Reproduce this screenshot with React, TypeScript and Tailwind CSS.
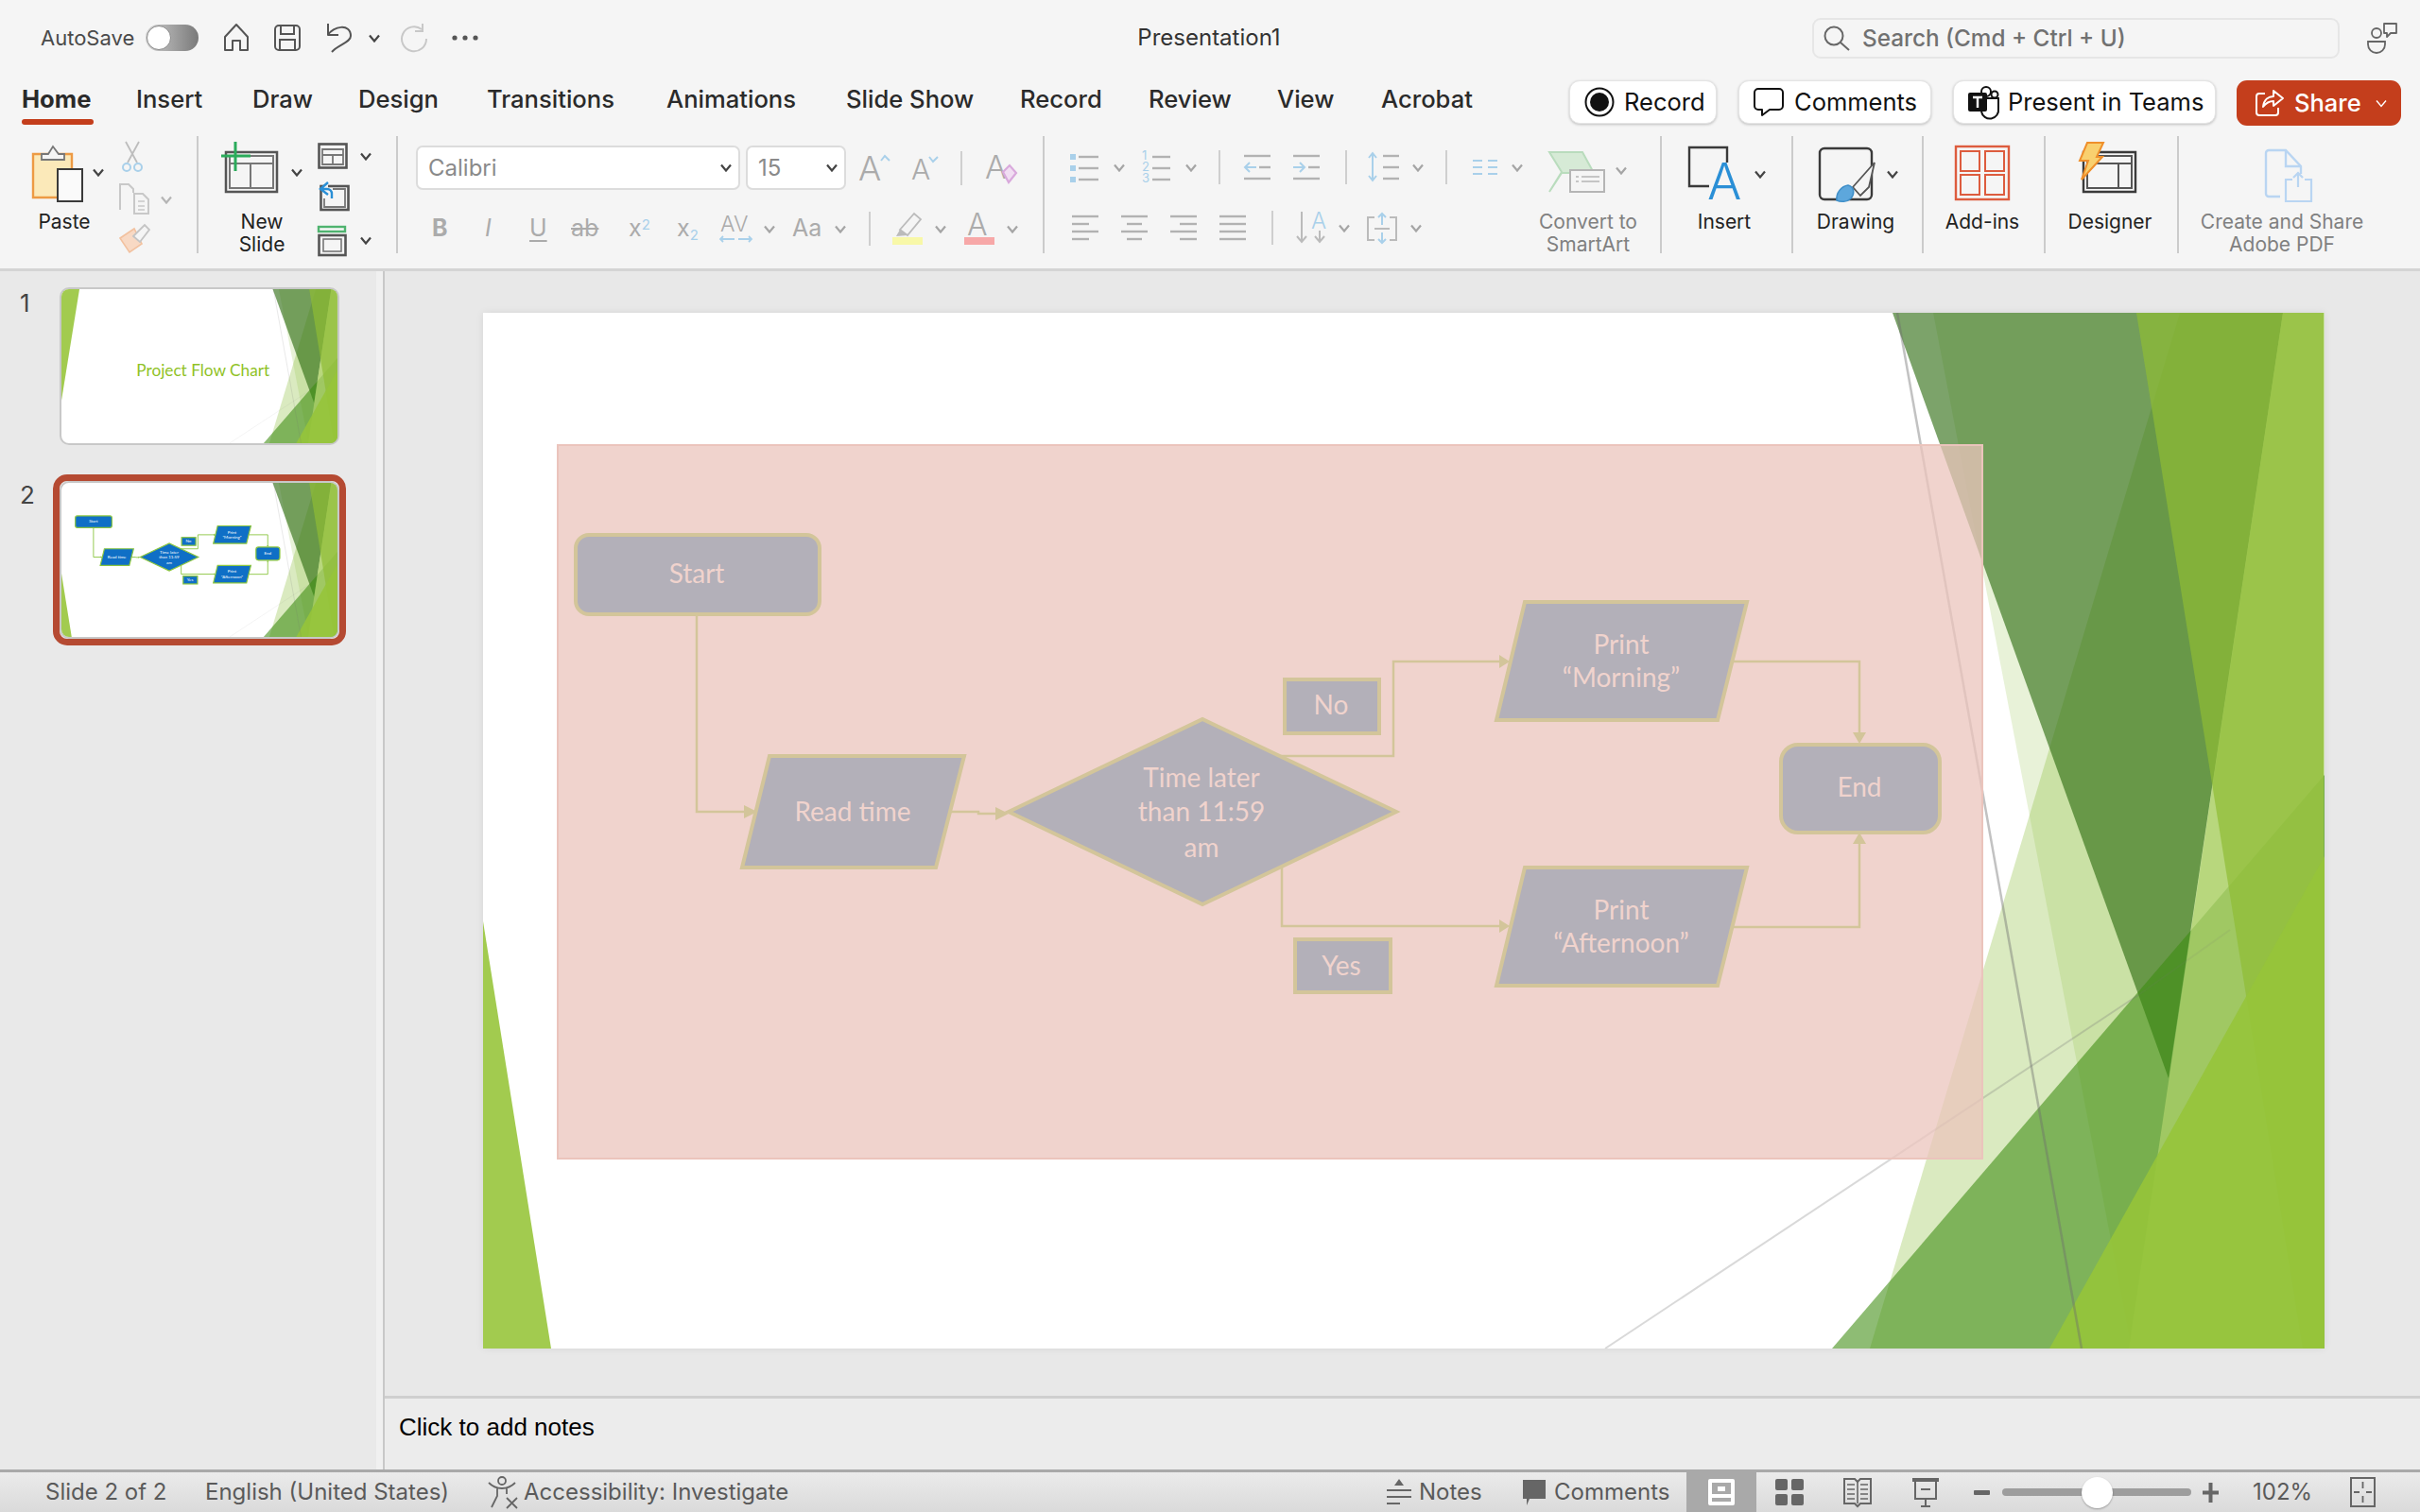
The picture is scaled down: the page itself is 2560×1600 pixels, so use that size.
import type { ReactNode } from "react";

const GRAY = "#b2b2b2";
const BLUE = "#a9d0ea";

// svg whose viewBox is given in page coordinates, so the numbers read straight off the screenshot
function Ico({ x, y, w, h, className = "", children }: { x: number; y: number; w: number; h: number; className?: string; children: ReactNode }) {
  return (
    <svg width={w} height={h} viewBox={`${x} ${y} ${w} ${h}`} fill="none" className={`shrink-0 overflow-visible ${className}`}>
      {children}
    </svg>
  );
}

function Chev({ className = "", color = "#444", width = 2.2 }: { className?: string; color?: string; width?: number }) {
  return (
    <svg width="12" height="9" viewBox="0 0 12 9" fill="none" className={`shrink-0 ${className}`}>
      <path d="M1 1.5l5 6 5-6" stroke={color} strokeWidth={width} />
    </svg>
  );
}

function Divider() {
  return <div className="h-[124px] w-[2px] shrink-0 bg-[#cbcbcb]" />;
}

function SmallDivider({ className = "" }: { className?: string }) {
  return <div className={`h-[36px] w-[2px] shrink-0 bg-[#cfcfcf] ${className}`} />;
}

function AlignIcon({ x, lines }: { x: number; lines: [number, number][] }) {
  const ys = [229, 237, 245, 253];
  return (
    <Ico x={x} y={226} w={30} h={30}>
      {lines.map(([a, b], i) => (
        <path key={i} d={`M${x + a} ${ys[i]}H${x + b}`} stroke={GRAY} strokeWidth="2.4" />
      ))}
    </Ico>
  );
}

const FLOW_POLYS = [
  "814,800 1020,800 990,918 785,918",
  "1613,637 1848,637 1817,762 1583,762",
  "1613,918 1848,918 1817,1043 1583,1043",
  "1067,859 1272,761 1477,859 1272,957",
];

const ARROWS = [
  "787,852 801,859 787,866",
  "1053,854 1067,861 1053,868",
  "1586,693 1597,700 1586,707",
  "1586,973 1597,980 1586,987",
  "1960,775 1967,787 1974,775",
  "1960,893 1967,881 1974,893",
];

const LINES = [
  "M737 650V859H790",
  "M1006 859H1035V861H1056",
  "M1352 800H1474V700H1590",
  "M1356 917V980H1590",
  "M1833 700H1967V780",
  "M1833 981H1967V888",
];

const LABELS: [string, number, number][] = [
  ["Start", 737, 606],
  ["Read time", 902, 858],
  ["Time later", 1271, 822],
  ["than 11:59", 1271, 858],
  ["am", 1271, 896],
  ["No", 1408, 745],
  ["Yes", 1419, 1021],
  ["Print", 1715, 681],
  ["“Morning”", 1715, 716],
  ["Print", 1715, 962],
  ["“Afternoon”", 1715, 997],
  ["End", 1967, 832],
];

function Flow({ fill, stroke, text, line, border, size }: { fill: string; stroke: string; text: string; line: number; border: number; size: number }) {
  return (
    <g>
      {LINES.map((d) => (
        <path key={d} d={d} stroke={stroke} strokeWidth={line} fill="none" />
      ))}
      {ARROWS.map((p) => (
        <polygon key={p} points={p} fill={stroke} />
      ))}
      <g fill={fill} stroke={stroke} strokeWidth={border}>
        <rect x="609" y="566" width="258" height="84" rx="14" />
        <rect x="1884" y="788" width="168" height="93" rx="18" />
        <rect x="1359" y="719" width="100" height="57" />
        <rect x="1370" y="994" width="101" height="56" />
        {FLOW_POLYS.map((p) => (
          <polygon key={p} points={p} strokeLinejoin="miter" />
        ))}
      </g>
      <g fill={text} fontSize={size} textAnchor="middle" dominantBaseline="central" className="font-[Lato,sans-serif]">
        {LABELS.map(([t, x, y], i) => (
          <text key={i} x={x} y={y}>
            {t}
          </text>
        ))}
      </g>
    </g>
  );
}

function SlideArt({ left }: { left: "top" | "bottom" }) {
  return (
    <g>
      {left === "bottom" ? (
        <polygon points="511,975 583,1427 511,1427" fill="#a2cb4f" />
      ) : (
        <polygon points="511,331 638,331 511,1125" fill="#a2cb4f" />
      )}
      <polygon points="2045,331 2255,1427 2459,1427 2459,331" fill="rgb(140,190,60)" fillOpacity=".2" />
      <polygon points="2306,331 1978,1427 2459,1427 2459,331" fill="rgb(140,190,60)" fillOpacity=".32" />
      <polygon points="2002,331 2294,1141 2415,331" fill="rgb(44,107,15)" fillOpacity=".62" />
      <polygon points="1938,1427 2459,820 2459,1427" fill="rgb(60,140,15)" fillOpacity=".58" />
      <polygon points="2415,331 2458,331 2458,1427 2252,1427" fill="rgb(176,211,108)" fillOpacity=".7" />
      <polygon points="2260,331 2458,331 2458,1427 2436,1427" fill="rgb(143,188,52)" fillOpacity=".7" />
      <polygon points="2168,1427 2459,906 2459,1427" fill="rgb(150,196,58)" fillOpacity=".9" />
      <path d="M2007 331L2202 1427" stroke="rgb(110,110,110)" strokeOpacity=".42" strokeWidth="2.5" />
      <path d="M1698 1427L2262 1053" stroke="rgb(120,120,120)" strokeOpacity=".28" strokeWidth="2" />
      <path d="M2262 1053L2359 984" stroke="rgb(120,120,120)" strokeOpacity=".1" strokeWidth="2" />
    </g>
  );
}

function Thumb({ n }: { n: 1 | 2 }) {
  return (
    <div className="h-[167px] w-[296px] overflow-hidden rounded-[10px] border-2 border-[#c8c8c8] bg-white">
      <svg viewBox="511 331 1948 1096" className="h-full w-full" preserveAspectRatio="none">
        <SlideArt left={n === 1 ? "top" : "bottom"} />
        {n === 1 ? (
          <text x="1510" y="950" fontSize="115" fill="#90c226" textAnchor="middle" className="font-[Lato,sans-serif]">
            Project Flow Chart
          </text>
        ) : (
          <Flow fill="#0f6fc6" stroke="#8bc53f" text="#ffffff" line={6} border={8} size={30} />
        )}
      </svg>
    </div>
  );
}

function BigLabel({ children, className = "" }: { children: ReactNode; className?: string }) {
  return <div className={`text-center text-[21px] leading-[24px] ${className}`}>{children}</div>;
}

function TitleBar() {
  return (
    <div className="flex h-[80px] items-center">
      <div className="flex w-[1129px] items-center">
        <span className="ml-[43px] w-[111px] text-[22px] text-[#4a4a4a]">AutoSave</span>
        <div className="h-[28px] w-[56px] rounded-full bg-linear-to-r from-[#cfcfcf] to-[#7a7a7a] p-[1px]">
          <div className="h-[26px] w-[26px] rounded-full border border-[#8a8a8a] bg-white" />
        </div>
        <Ico x={236} y={24} w={28} h={30} className="ml-[26px]">
          <path d="M238 52V38L250 25L262 38V52H254V42H246V52Z" stroke="#555" strokeWidth="2" strokeLinejoin="round" />
        </Ico>
        <Ico x={290} y={25} w={28} h={30} className="ml-[26px]">
          <rect x="291" y="27" width="26" height="26" rx="4" stroke="#555" strokeWidth="2" />
          <path d="M297 27V36H311V27M296 53V42H312V53" stroke="#555" strokeWidth="2" />
        </Ico>
        <Ico x={345} y={23} w={28} h={34} className="ml-[27px]">
          <path d="M347 25V37H358M347 37C352 28 371 24 371 38C371 45 358 47 351 55" stroke="#555" strokeWidth="2" strokeLinejoin="round" />
        </Ico>
        <Chev className="ml-[17px]" />
        <Ico x={424} y={24} w={28} h={32} className="ml-[22px]">
          <path d="M446 31A13 13 0 1 0 451 41M447 25V33H439" stroke="#c8c8c8" strokeWidth="2" />
        </Ico>
        <Ico x={478} y={36} w={28} h={8} className="ml-[26px]">
          <circle cx="481" cy="40" r="2.6" fill="#555" />
          <circle cx="492" cy="40" r="2.6" fill="#555" />
          <circle cx="503" cy="40" r="2.6" fill="#555" />
        </Ico>
      </div>
      <div className="w-[300px] text-center text-[24px] text-[#333]">Presentation1</div>
      <div className="ml-[488px] flex h-[43px] w-[558px] items-center rounded-[9px] border-2 border-[#e6e6e6] pl-[10px]">
        <Ico x={1928} y={27} w={28} h={26}>
          <circle cx="1939" cy="38" r="9.5" stroke="#666" strokeWidth="2" />
          <path d="M1946 45L1955 53" stroke="#666" strokeWidth="2" />
        </Ico>
        <span className="ml-[13px] whitespace-nowrap text-[24.3px] font-medium text-[#717171]">Search (Cmd + Ctrl + U)</span>
      </div>
      <Ico x={2503} y={23} w={34} h={34} className="ml-[28px]">
        <circle cx="2514" cy="35" r="5" stroke="#666" strokeWidth="1.8" />
        <path d="M2505 44H2523V47A9 9 0 0 1 2505 47Z" stroke="#666" strokeWidth="1.8" />
        <path d="M2522 25H2535V35H2529L2525 39V35H2522Z" stroke="#666" strokeWidth="1.8" strokeLinejoin="round" />
      </Ico>
    </div>
  );
}

const TABS: [string, string][] = [
  ["Home", "w-[121px] font-bold"],
  ["Insert", "w-[123px] font-medium"],
  ["Draw", "w-[112px] font-medium"],
  ["Design", "w-[136px] font-medium"],
  ["Transitions", "w-[190px] font-medium"],
  ["Animations", "w-[190px] font-medium"],
  ["Slide Show", "w-[184px] font-medium"],
  ["Record", "w-[136px] font-medium"],
  ["Review", "w-[136px] font-medium"],
  ["View", "w-[110px] font-medium"],
  ["Acrobat", "w-[199px] font-medium"],
];

function PillButton({ children, className }: { children: ReactNode; className: string }) {
  return (
    <div className={`flex h-[46px] items-center rounded-[11px] border border-[#e4e4e4] bg-white text-[25.5px] text-[#111] shadow-[0_1px_3px_rgba(0,0,0,0.22)] ${className}`}>
      {children}
    </div>
  );
}

function TabRow() {
  return (
    <div className="flex h-[64px]">
      <div className="flex pl-[23px] pt-[9px]">
        {TABS.map(([t, cls]) => (
          <div key={t} className={`text-[25.6px] leading-[32px] text-[#2a2a2a] ${cls}`}>
            {t}
            {t === "Home" && <div className="mt-[5px] h-[6px] w-[76px] rounded-full bg-[#c43e1c]" />}
          </div>
        ))}
      </div>
      <div className="flex pt-[5px]">
        <PillButton className="w-[156px] pl-[15px]">
          <Ico x={1676} y={92} w={32} h={32}>
            <circle cx="1692" cy="108" r="14.5" stroke="#111" strokeWidth="2" />
            <circle cx="1692" cy="108" r="10" fill="#111" />
          </Ico>
          <span className="ml-[10px]">Record</span>
        </PillButton>
        <PillButton className="ml-[23px] w-[204px] pl-[15px]">
          <Ico x={1856} y={93} w={32} h={32}>
            <path d="M1861 95H1883A4 4 0 0 1 1887 99V113A4 4 0 0 1 1883 117H1873L1865 123V117H1861A4 4 0 0 1 1857 113V99A4 4 0 0 1 1861 95Z" stroke="#111" strokeWidth="2" strokeLinejoin="round" />
          </Ico>
          <span className="ml-[11px]">Comments</span>
        </PillButton>
        <PillButton className="ml-[23px] w-[278px] pl-[14px]">
          <Ico x={2081} y={91} w={34} h={34}>
            <circle cx="2101" cy="97" r="5" stroke="#111" strokeWidth="2" />
            <circle cx="2110" cy="100" r="3.5" stroke="#111" strokeWidth="2" />
            <path d="M2096 104H2114V115A9 9 0 0 1 2096 118" stroke="#111" strokeWidth="2" />
            <rect x="2082" y="98" width="20" height="20" rx="2" fill="#111" />
            <path d="M2087 103H2097M2092 103V114" stroke="#fff" strokeWidth="2.4" />
          </Ico>
          <span className="ml-[9px]">Present in Teams</span>
        </PillButton>
        <div className="ml-[22px] flex h-[48px] w-[174px] items-center rounded-[11px] bg-[#c43e1c] pl-[20px] text-[25.5px] font-medium text-white">
          <Ico x={2386} y={93} w={30} h={30}>
            <path d="M2396 98H2390A3 3 0 0 0 2387 101V118A3 3 0 0 0 2390 121H2407A3 3 0 0 0 2410 118V113" stroke="#fff" strokeWidth="2" />
            <path d="M2394 112C2395 104 2400 101 2405 101V95L2415 103L2405 111V106C2400 106 2397 108 2394 112Z" stroke="#fff" strokeWidth="2" strokeLinejoin="round" />
          </Ico>
          <span className="ml-[11px]">Share</span>
          <Chev className="ml-[15px]" color="#fff" width={1.4} />
        </div>
      </div>
    </div>
  );
}

function ClipboardGroup() {
  return (
    <div className="flex w-[208px] shrink-0">
      <div className="ml-[23px] w-[103px]">
        <div className="flex h-[79px] pt-[10px]">
          <Ico x={34} y={154} w={54} h={60} className="ml-[11px]">
            <path d="M35 163H76V209H35Z" stroke="#ed9a44" strokeWidth="2.4" fill="#fbe9b9" />
            <path d="M44 169V163H51L56 155L62 163H68V169Z" stroke="#777" strokeWidth="1.8" fill="#f5f5f5" />
            <rect x="61" y="179" width="26" height="34" fill="#fafafa" stroke="#3a3a3a" strokeWidth="2" />
          </Ico>
          <Chev className="ml-[10px] mt-[24px]" />
        </div>
        <BigLabel className="w-[90px] text-[#222]">Paste</BigLabel>
      </div>
      <div className="pt-[6px]">
        <Ico x={130} y={150} w={24} h={34} className="ml-[2px]">
          <path d="M135 150L147 172M149 150L137 172" stroke="#bdbdbd" strokeWidth="1.8" />
          <circle cx="136" cy="177" r="4" stroke={BLUE} strokeWidth="2" />
          <circle cx="148" cy="177" r="4" stroke={BLUE} strokeWidth="2" />
        </Ico>
        <div className="mt-[10px] flex items-center">
          <Ico x={126} y={194} w={34} h={34}>
            <path d="M127 222V195H136L141 200V204M142 205H151L157 211V226H142Z" stroke="#c8c8c8" strokeWidth="2" />
            <path d="M146 213H153M146 218H153M146 222H153" stroke="#c8c8c8" strokeWidth="1.6" />
          </Ico>
          <Chev className="ml-[10px]" color="#b5b5b5" />
        </div>
        <Ico x={126} y={236} w={34} h={34} className="mt-[8px]">
          <path d="M127 252L142 242L150 258L137 267Z" fill="#f8d9c4" stroke="#f2c19f" strokeWidth="1.6" />
          <path d="M141 250L153 238L158 243L148 256Z" fill="#f5f5f5" stroke="#c4c4c4" strokeWidth="1.8" />
        </Ico>
      </div>
    </div>
  );
}

function SlidesGroup() {
  return (
    <div className="flex w-[209px] shrink-0">
      <div className="w-[126px]">
        <div className="flex h-[79px] pt-[6px]">
          <Ico x={232} y={150} w={62} h={56} className="ml-[22px]">
            <path d="M239 161H293V203H239Z" stroke="#555" strokeWidth="2.5" />
            <path d="M243 165H289V199H243ZM243 173H289M265 173V199" stroke="#777" strokeWidth="2" />
            <path d="M249 150V181M234 165H265" stroke="#2bab5b" strokeWidth="3" />
          </Ico>
          <Chev className="ml-[14px] mt-[28px]" />
        </div>
        <BigLabel className="ml-[22px] w-[90px] text-[#222]">
          New
          <br />
          Slide
        </BigLabel>
      </div>
      <div className="pt-[7px]">
        <div className="flex items-center">
          <Ico x={336} y={151} w={33} h={28}>
            <rect x="337.5" y="152.5" width="29" height="25" stroke="#555" strokeWidth="2.6" />
            <path d="M341 158H363V174H341ZM341 164H363M352 164V174" stroke="#777" strokeWidth="1.8" />
          </Ico>
          <Chev className="ml-[12px]" />
        </div>
        <Ico x={334} y={192} w={35} h={32} className="mt-[13px]">
          <rect x="337.5" y="197" width="29" height="25" stroke="#555" strokeWidth="2.6" />
          <path d="M350 200H363V219H341V210" stroke="#777" strokeWidth="1.8" />
          <path d="M345 193L337 200L345 206M338 200H344A5 5 0 0 1 349 205V210" stroke="#2a8fd6" strokeWidth="2.4" fill="#f5f5f5" />
        </Ico>
        <div className="mt-[13px] flex items-center">
          <Ico x={336} y={236} w={33} h={34}>
            <rect x="337" y="239" width="28" height="5" stroke="#4fb36f" strokeWidth="2.4" />
            <rect x="337.5" y="248" width="28" height="21" stroke="#555" strokeWidth="2.6" />
            <rect x="342" y="252" width="19" height="13" stroke="#777" strokeWidth="1.6" />
          </Ico>
          <Chev className="ml-[12px]" />
        </div>
      </div>
    </div>
  );
}

function Combo({ text, className }: { text: string; className: string }) {
  return (
    <div className={`flex h-[47px] items-center justify-between rounded-[7px] border-2 border-[#dcdcdc] bg-white pl-[11px] pr-[7px] text-[24px] text-[#8a8a8a] ${className}`}>
      <span>{text}</span>
      <Chev />
    </div>
  );
}

function FontGroup() {
  return (
    <div className="w-[682px] shrink-0 pt-[10px]">
      <div className="flex h-[47px] items-center pl-[19px]">
        <Combo text="Calibri" className="w-[343px]" />
        <Combo text="15" className="ml-[6px] w-[106px]" />
        <Ico x={908} y={158} w={34} h={36} className="ml-[13px]">
          <text x="908" y="189" fontSize="36" fontWeight="300" fill="#ababab">A</text>
          <path d="M932 168L936 163L941 168" stroke={BLUE} strokeWidth="2" />
        </Ico>
        <Ico x={964} y={160} w={30} h={34} className="ml-[22px]">
          <text x="964" y="189" fontSize="30" fontWeight="300" fill="#ababab">A</text>
          <path d="M983 165L987 170L992 165" stroke={BLUE} strokeWidth="2" />
        </Ico>
        <SmallDivider className="ml-[22px]" />
        <Ico x={1040} y={158} w={38} h={36} className="ml-[22px]">
          <text x="1042" y="187" fontSize="34" fontWeight="300" fill="#ababab">A</text>
          <path d="M1061 180L1068 173L1075 181L1067 191Z" stroke="#d9a9dc" strokeWidth="2.2" fill="#f1def2" />
        </Ico>
      </div>
      <div className="mt-[21px] flex h-[40px] items-center pl-[36px] text-[#ababab]">
        <span className="w-[53px] text-[25px] font-bold">B</span>
        <span className="w-[50px] pl-[3px] text-[25px] italic">I</span>
        <span className="w-[44px] text-[25px] underline underline-offset-4">U</span>
        <span className="w-[61px] text-[25px] line-through">ab</span>
        <span className="w-[51px] text-[25px]">
          x<sup className="text-[15px] text-[#a9d0ea]">2</sup>
        </span>
        <span className="w-[44px] text-[25px]">
          x<sub className="text-[15px] text-[#a9d0ea]">2</sub>
        </span>
        <Ico x={758} y={222} w={36} h={38}>
          <text x="760" y="244" fontSize="23" fontWeight="300" fill="#ababab">AV</text>
          <path d="M761 252H775M763 249L760 252L763 255M779 252H793M790 249L793 252L790 255" stroke={BLUE} strokeWidth="1.8" />
        </Ico>
        <Chev className="ml-[12px]" color="#a5a5a5" />
        <span className="ml-[18px] w-[45px] text-[25px]">Aa</span>
        <Chev color="#a5a5a5" />
        <SmallDivider className="ml-[24px]" />
        <Ico x={942} y={222} w={34} h={38} className="ml-[23px]">
          <path d="M950 242L965 225L972 231L958 248Z" stroke="#bbb" strokeWidth="1.8" />
          <path d="M946 249L950 242L958 248Z" fill="#bbb" />
          <rect x="942" y="250" width="32" height="8" fill="#f8f8a8" />
        </Ico>
        <Chev className="ml-[11px]" color="#a5a5a5" />
        <Ico x={1018} y={222} w={32} h={38} className="ml-[19px]">
          <text x="1021" y="248" fontSize="32" fontWeight="300" fill="#ababab">A</text>
          <rect x="1018" y="250" width="32" height="8" fill="#f7a8a8" />
        </Ico>
        <Chev className="ml-[13px]" color="#a5a5a5" />
      </div>
    </div>
  );
}

function ParagraphGroup() {
  const line = (x1: number, x2: number, y: number, key: number) => <path key={key} d={`M${x1} ${y}H${x2}`} stroke={GRAY} strokeWidth="2.4" />;
  return (
    <div className="w-[651px] shrink-0">
      <div className="flex">
        <div className="w-[525px] shrink-0 pt-[16px]">
          <div className="flex h-[34px] items-center pl-[27px]">
            <Ico x={1132} y={160} w={30} h={32}>
              {[162, 174, 186].map((y) => (
                <rect key={y} x="1132" y={y} width="6" height="6" fill={BLUE} />
              ))}
              {[165, 177, 189].map((y, i) => line(1141, 1162, y, i))}
            </Ico>
            <Chev className="ml-[16px]" color="#a5a5a5" />
            <Ico x={1207} y={160} w={31} h={32} className="ml-[17px]">
              {["1", "2", "3"].map((t, i) => (
                <text key={t} x="1208" y={168 + i * 12} fontSize="13" fill={BLUE}>{t}</text>
              ))}
              {[165, 177, 189].map((y, i) => line(1219, 1238, y, i))}
            </Ico>
            <Chev className="ml-[16px]" color="#a5a5a5" />
            <SmallDivider className="ml-[23px]" />
            <Ico x={1316} y={162} w={28} h={30} className="ml-[25px]">
              {line(1316, 1344, 165, 0)}
              {line(1332, 1344, 177, 1)}
              {line(1316, 1344, 189, 2)}
              <path d="M1329 177H1317M1322 172L1317 177L1322 182" stroke={BLUE} strokeWidth="2" />
            </Ico>
            <Ico x={1368} y={162} w={28} h={30} className="ml-[24px]">
              {line(1368, 1396, 165, 0)}
              {line(1384, 1396, 177, 1)}
              {line(1368, 1396, 189, 2)}
              <path d="M1368 177H1380M1375 172L1380 177L1375 182" stroke={BLUE} strokeWidth="2" />
            </Ico>
            <SmallDivider className="ml-[27px]" />
            <Ico x={1447} y={160} w={33} h={34} className="ml-[22px]">
              {[165, 177, 189].map((y, i) => line(1463, 1480, y, i))}
              <path d="M1452 162V191M1448 167L1452 162L1456 167M1448 186L1452 191L1456 186" stroke={BLUE} strokeWidth="2" />
            </Ico>
            <Chev className="ml-[14px]" color="#a5a5a5" />
            <SmallDivider className="ml-[23px]" />
            <Ico x={1558} y={166} w={26} h={22} className="ml-[27px]">
              {[170, 177, 184].map((y) => (
                <path key={y} d={`M1558 ${y}H1568M1574 ${y}H1584`} stroke={BLUE} strokeWidth="2" />
              ))}
            </Ico>
            <Chev className="ml-[15px]" color="#a5a5a5" />
          </div>
          <div className="mt-[30px] flex h-[34px] items-center pl-[29px]">
            <AlignIcon x={1134} lines={[[0, 28], [0, 18], [0, 28], [0, 18]]} />
            <div className="ml-[22px]">
              <AlignIcon x={1186} lines={[[0, 28], [6, 22], [0, 28], [6, 22]]} />
            </div>
            <div className="ml-[22px]">
              <AlignIcon x={1238} lines={[[0, 28], [10, 28], [0, 28], [10, 28]]} />
            </div>
            <div className="ml-[22px]">
              <AlignIcon x={1290} lines={[[0, 28], [0, 28], [0, 28], [0, 28]]} />
            </div>
            <SmallDivider className="ml-[25px]" />
            <Ico x={1371} y={222} w={32} h={38} className="ml-[24px]">
              <path d="M1377 224V256M1372 250L1377 256L1382 250M1396 244V256M1391 250L1396 256L1401 250" stroke="#bbb" strokeWidth="2" />
              <text x="1387" y="242" fontSize="24" fontWeight="300" fill={BLUE}>A</text>
            </Ico>
            <Chev className="ml-[13px]" color="#a5a5a5" />
            <Ico x={1445} y={224} w={34} h={34} className="ml-[17px]">
              <path d="M1454 230H1447V254H1454M1470 230H1477V254H1470M1454 242H1470" stroke="#bbb" strokeWidth="2" />
              <path d="M1462 226V238M1458 230L1462 226L1466 230M1462 246V257M1458 253L1462 257L1466 253" stroke={BLUE} strokeWidth="2" />
            </Ico>
            <Chev className="ml-[13px]" color="#a5a5a5" />
          </div>
        </div>
        <div className="w-[126px] shrink-0 pt-[14px]">
          <div className="flex h-[65px] pl-[6px]">
            <Ico x={1634} y={158} w={62} h={48}>
              <path d="M1637 161H1672L1684 183H1650L1637 203L1650 182Z" fill="#d6ead6" stroke="#b9dcbd" strokeWidth="2" />
              <rect x="1659" y="180" width="36" height="23" fill="#f5f5f5" stroke="#b5b5b5" strokeWidth="2" />
              <path d="M1665 187H1668M1671 187H1690M1665 192H1668M1671 192H1690" stroke="#b5b5b5" strokeWidth="1.6" />
            </Ico>
            <Chev className="ml-[11px] mt-[18px]" color="#a5a5a5" />
          </div>
          <BigLabel className="-ml-[9px] w-[118px] whitespace-nowrap text-[#808080]">
            Convert to
            <br />
            SmartArt
          </BigLabel>
        </div>
      </div>
    </div>
  );
}

function RightGroups() {
  return (
    <>
      <Divider />
      <div className="w-[137px] shrink-0 pt-[10px]">
        <div className="flex h-[69px]">
          <Ico x={1784} y={152} w={60} h={60} className="ml-[26px]">
            <path d="M1827 170V154H1787V195H1808" stroke="#3a3a3a" strokeWidth="2.4" />
            <text x="1806" y="209" fontSize="54" fontWeight="300" fill="#2a8fd6">A</text>
          </Ico>
          <Chev className="ml-[12px] mt-[26px]" />
        </div>
        <BigLabel className="w-[132px] text-[#222]">Insert</BigLabel>
      </div>
      <Divider />
      <div className="w-[136px] shrink-0 pt-[10px]">
        <div className="flex h-[69px]">
          <Ico x={1922} y={152} w={64} h={62} className="ml-[25px]">
            <rect x="1925" y="155" width="55" height="54" rx="5" stroke="#3a3a3a" strokeWidth="2.4" />
            <path d="M1960 196L1983 170L1977 196L1968 205Z" fill="#f5f5f5" stroke="#555" strokeWidth="1.8" />
            <path d="M1943 210C1942 202 1948 195 1955 194C1962 196 1962 203 1958 208C1954 212 1947 212 1943 210Z" fill="#5da7dc" stroke="#3f8fc9" strokeWidth="1.6" />
          </Ico>
          <Chev className="ml-[10px] mt-[26px]" />
        </div>
        <BigLabel className="w-[132px] text-[#222]">Drawing</BigLabel>
      </div>
      <Divider />
      <div className="w-[127px] shrink-0 pt-[9px]">
        <div className="flex h-[70px] pl-[32px]">
          <Ico x={2066} y={152} w={60} h={60}>
            <rect x="2068" y="154" width="56" height="56" stroke="#dd5c3e" strokeWidth="2.4" />
            <rect x="2073" y="159" width="20" height="21" stroke="#dd5c3e" strokeWidth="2" />
            <rect x="2099" y="159" width="20" height="21" stroke="#dd5c3e" strokeWidth="2" />
            <rect x="2073" y="184" width="20" height="21" stroke="#dd5c3e" strokeWidth="2" />
            <rect x="2099" y="184" width="20" height="21" stroke="#dd5c3e" strokeWidth="2" />
          </Ico>
        </div>
        <BigLabel className="w-[124px] text-[#222]">Add-ins</BigLabel>
      </div>
      <Divider />
      <div className="w-[139px] shrink-0 pt-[6px]">
        <div className="flex h-[73px] pl-[33px]">
          <Ico x={2197} y={150} w={64} h={56}>
            <path d="M2204 161H2259V203H2204Z" stroke="#3a3a3a" strokeWidth="2.4" />
            <path d="M2208 165H2255V199H2208ZM2208 173H2255M2241 173V199" stroke="#555" strokeWidth="2" />
            <path d="M2208 151H2225L2218 166H2224L2202 190L2209 170H2200Z" fill="#f9d06f" stroke="#ef8f2b" strokeWidth="2" />
          </Ico>
        </div>
        <BigLabel className="w-[136px] text-[#222]">Designer</BigLabel>
      </div>
      <Divider />
      <div className="w-[255px] shrink-0 pt-[13px]">
        <div className="flex h-[66px] pl-[90px]">
          <Ico x={2394} y={157} w={52} h={58}>
            <path d="M2411 208H2399A3 3 0 0 1 2396 205V162A3 3 0 0 1 2399 159H2417L2433 176V184" stroke="#b9d5f2" strokeWidth="2.4" />
            <path d="M2417 159V176H2433" stroke="#b9d5f2" strokeWidth="2.4" />
            <path d="M2424 190H2417V213H2444V190H2437M2430 198V183M2425 188L2430 183L2435 188" stroke="#b9d5f2" strokeWidth="2.2" />
          </Ico>
        </div>
        <BigLabel className="w-[218px] whitespace-nowrap text-[#808080]">
          Create and Share
          <br />
          Adobe PDF
        </BigLabel>
      </div>
    </>
  );
}

function Ribbon() {
  return (
    <div className="flex h-[124px]">
      <ClipboardGroup />
      <Divider />
      <SlidesGroup />
      <Divider />
      <FontGroup />
      <Divider />
      <ParagraphGroup />
      <RightGroups />
    </div>
  );
}

function SlidePanel() {
  return (
    <div className="flex shrink-0">
      <div className="w-[398px] bg-[#e9e9e9] pt-[17px]">
        <div className="flex">
          <div className="w-[63px] pl-[21px] pt-[2px] text-[26px] leading-[30px] text-[#444]">1</div>
          <Thumb n={1} />
        </div>
        <div className="mt-[31px] flex">
          <div className="w-[56px] pl-[21px] pt-[7px] text-[26px] leading-[30px] text-[#444]">2</div>
          <div className="rounded-[15px] border-[7px] border-[#b54a32]">
            <Thumb n={2} />
          </div>
        </div>
      </div>
      <div className="w-[7px] bg-[#f0f0f0]" />
      <div className="w-[2px] bg-[#c8c8c8]" />
    </div>
  );
}

function MainSlide() {
  return (
    <div className="h-[1096px] w-[1948px] bg-white shadow-[0_0_8px_rgba(0,0,0,0.08)]">
      <svg viewBox="511 331 1948 1096" className="h-full w-full">
        <SlideArt left="bottom" />
        <rect x="590" y="471" width="1507" height="755" fill="#ebc4bc" fillOpacity=".75" stroke="#ebc4bc" strokeWidth="2" />
        <Flow fill="#b3b0b9" stroke="#d3c59a" text="#f0d3cd" line={2.5} border={4} size={28} />
      </svg>
    </div>
  );
}

function StatusBar() {
  return (
    <div className="flex h-[45px] shrink-0 items-center border-t-[3px] border-[#a9a9a9] bg-linear-to-b from-[#ebebeb] to-[#dadada] text-[24px] text-[#5a5a5a]">
      <span className="ml-[48px] w-[169px] whitespace-nowrap">Slide 2 of 2</span>
      <span className="w-[298px] whitespace-nowrap">English (United States)</span>
      <Ico x={514} y={1560} w={34} h={36}>
        <circle cx="530" cy="1566" r="4" stroke="#666" strokeWidth="1.8" />
        <path d="M516 1568C520 1572 526 1574 530 1574C534 1574 540 1572 544 1568M525 1574V1582L519 1594M535 1574V1580" stroke="#666" strokeWidth="1.8" />
        <path d="M535 1584L546 1595M546 1584L535 1595" stroke="#666" strokeWidth="1.8" />
      </Ico>
      <span className="ml-[5px] w-[912px] whitespace-nowrap">Accessibility: Investigate</span>
      <Ico x={1465} y={1562} w={28} h={32}>
        <path d="M1479 1564L1484 1571H1474Z" fill="#666" />
        <path d="M1466 1576H1492M1466 1583H1492M1466 1590H1480" stroke="#666" strokeWidth="2.2" />
      </Ico>
      <span className="ml-[7px] w-[108px]">Notes</span>
      <Ico x={1607} y={1564} w={28} h={30}>
        <path d="M1609 1566H1633V1586H1616L1613 1593V1586H1609Z" fill="#666" />
      </Ico>
      <span className="ml-[7px] w-[140px] whitespace-nowrap">Comments</span>
      <div className="flex h-[42px] w-[74px] items-center justify-center bg-[#a9a9a9]">
        <Ico x={1806} y={1564} w={30} h={30}>
          <rect x="1807" y="1565" width="28" height="28" rx="2" fill="#fff" />
          <rect x="1811" y="1569" width="20" height="12" fill="#a9a9a9" />
          <rect x="1817" y="1573" width="8" height="5" fill="#fff" />
          <rect x="1811" y="1585" width="20" height="4" fill="#a9a9a9" />
        </Ico>
      </div>
      <Ico x={1878} y={1564} w={31} h={30} className="ml-[20px]">
        <rect x="1878" y="1565" width="13" height="12" rx="2" fill="#666" />
        <rect x="1895" y="1565" width="13" height="12" rx="2" fill="#666" />
        <rect x="1878" y="1581" width="13" height="12" rx="2" fill="#666" />
        <rect x="1895" y="1581" width="13" height="12" rx="2" fill="#666" />
      </Ico>
      <Ico x={1950} y={1563} w={31} h={32} className="ml-[41px]">
        <path d="M1951 1565H1962L1965 1568L1968 1565H1979V1591H1968L1965 1594L1962 1591H1951Z" stroke="#666" strokeWidth="2" />
        <path d="M1965 1568V1591M1954 1571H1962M1954 1576H1962M1954 1581H1962M1954 1586H1962M1968 1571H1976M1968 1576H1976M1968 1581H1976M1968 1586H1976" stroke="#666" strokeWidth="1.6" />
      </Ico>
      <Ico x={2022} y={1563} w={31} h={34} className="ml-[41px]">
        <rect x="2023" y="1565" width="28" height="4" fill="#666" />
        <path d="M2026 1569V1587H2048V1569M2032 1577H2042M2037 1587V1595M2032 1595H2042" stroke="#666" strokeWidth="2" />
      </Ico>
      <div className="ml-[35px] h-[5px] w-[17px] rounded-[1px] bg-[#666]" />
      <div className="ml-[13px] flex h-[8px] w-[200px] items-center rounded-full bg-[#9d9d9d]">
        <div className="ml-[84px] h-[33px] w-[33px] shrink-0 rounded-full bg-white shadow-[0_1px_2px_rgba(0,0,0,0.3)]" />
      </div>
      <Ico x={2330} y={1567} w={17} h={23} className="ml-[12px]">
        <path d="M2330 1578.5H2347M2338.5 1568V1589" stroke="#666" strokeWidth="4" />
      </Ico>
      <span className="ml-[36px] w-[103px]">102%</span>
      <Ico x={2486} y={1563} w={27} h={32}>
        <rect x="2487" y="1564" width="25" height="30" stroke="#666" strokeWidth="2" />
        <path d="M2499.5 1568V1575M2499.5 1583V1590M2490 1579H2496M2503 1579H2509" stroke="#666" strokeWidth="1.8" />
      </Ico>
    </div>
  );
}

export default function App() {
  return (
    <div className="flex h-[1600px] w-[2560px] flex-col overflow-hidden bg-[#f5f5f5] font-[Inter,sans-serif]">
      <div className="h-[287px] shrink-0 border-b-[3px] border-[#d4d4d4]">
        <TitleBar />
        <TabRow />
        <Ribbon />
      </div>
      <div className="flex min-h-0 flex-1">
        <SlidePanel />
        <div className="flex min-w-0 flex-1 flex-col">
          <div className="h-[1190px] shrink-0 bg-[#e8e8e8] pl-[104px] pt-[44px]">
            <MainSlide />
          </div>
          <div className="flex flex-1 items-start border-t-[3px] border-[#cfcfcf] bg-[#ececec] pl-[15px] pt-[15px] font-['Liberation_Sans',sans-serif] text-[26px] leading-[30px] text-black">
            Click to add notes
          </div>
        </div>
      </div>
      <StatusBar />
    </div>
  );
}
